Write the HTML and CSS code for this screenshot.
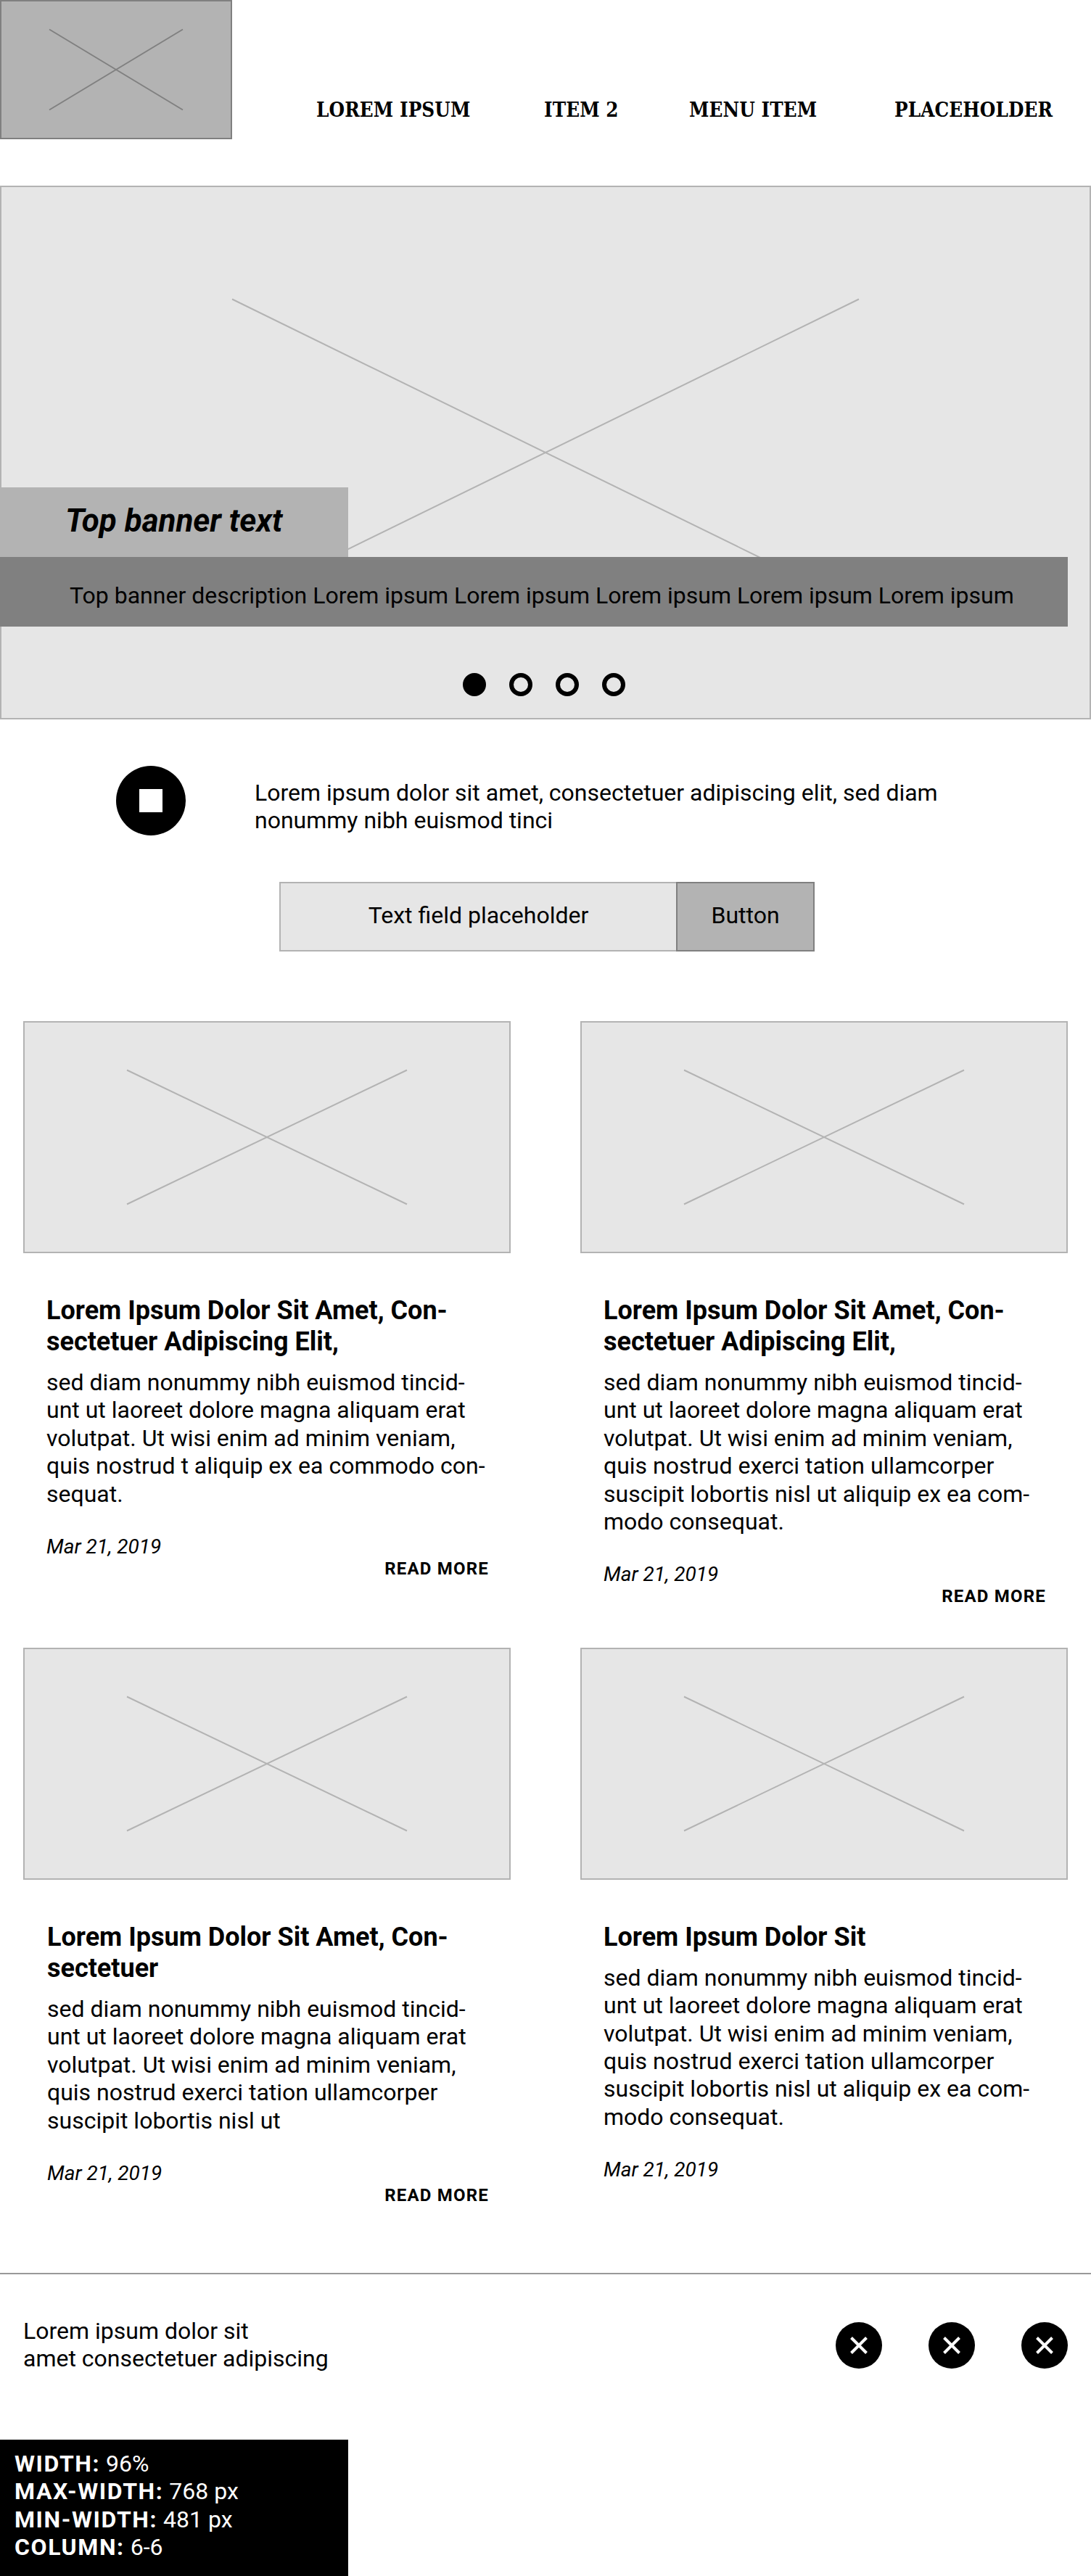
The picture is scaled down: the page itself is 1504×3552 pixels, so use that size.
FILE: index.html
```html
<!DOCTYPE html>
<html lang="en">
<head>
<meta charset="utf-8">
<title>Wireframe</title>
<link rel="stylesheet" href="styles.css">
</head>
<body>
<header class="header">
  <svg class="logo" viewBox="0 0 320 192"><path d="M68 40.5 252 151.5M252 40.5 68 151.5"/></svg>
  <nav class="nav">
    <a class="nav-item">LOREM IPSUM</a>
    <a class="nav-item">ITEM 2</a>
    <a class="nav-item">MENU ITEM</a>
    <a class="nav-item">PLACEHOLDER</a>
  </nav>
</header>

<section class="banner">
  <svg class="banner-cross" viewBox="0 0 1504 736"><path d="M320 156.500 1184 579.500M1184 156.500 320 579.500"/></svg>
  <h1 class="banner-title">Top banner text</h1>
  <p class="banner-text">Top banner description Lorem ipsum Lorem ipsum Lorem ipsum Lorem ipsum Lorem ipsum</p>
  <div class="dots"><i class="dot active"></i><i class="dot"></i><i class="dot"></i><i class="dot"></i></div>
</section>

<section class="intro">
  <div class="intro-icon"><i class="intro-square"></i></div>
  <p class="intro-text">Lorem ipsum dolor sit amet, consectetuer adipiscing elit, sed diam<br>nonummy nibh euismod tinci</p>
</section>

<form class="form">
  <div class="field">Text field placeholder</div>
  <div class="button">Button</div>
</form>

<main class="cards">
  <article class="card">
    <svg class="thumb" viewBox="0 0 672 320"><path d="M143 67.500 529 252.500M529 67.500 143 252.500"/></svg>
    <div class="card-body">
      <h2 class="card-title">Lorem Ipsum Dolor Sit Amet, Con-<br>sectetuer Adipiscing Elit,</h2>
      <p class="card-text">sed diam nonummy nibh euismod tincid-<br>unt ut laoreet dolore magna aliquam erat<br>volutpat. Ut wisi enim ad minim veniam,<br>quis nostrud t aliquip ex ea commodo con-<br>sequat.</p>
      <p class="date">Mar 21, 2019</p>
      <a class="more">READ MORE</a>
    </div>
  </article>
  <article class="card">
    <svg class="thumb" viewBox="0 0 672 320"><path d="M143 67.500 529 252.500M529 67.500 143 252.500"/></svg>
    <div class="card-body">
      <h2 class="card-title">Lorem Ipsum Dolor Sit Amet, Con-<br>sectetuer Adipiscing Elit,</h2>
      <p class="card-text">sed diam nonummy nibh euismod tincid-<br>unt ut laoreet dolore magna aliquam erat<br>volutpat. Ut wisi enim ad minim veniam,<br>quis nostrud exerci tation ullamcorper<br>suscipit lobortis nisl ut aliquip ex ea com-<br>modo consequat.</p>
      <p class="date">Mar 21, 2019</p>
      <a class="more">READ MORE</a>
    </div>
  </article>
  <article class="card">
    <svg class="thumb" viewBox="0 0 672 320"><path d="M143 67.500 529 252.500M529 67.500 143 252.500"/></svg>
    <div class="card-body inset">
      <h2 class="card-title">Lorem Ipsum Dolor Sit Amet, Con-<br>sectetuer</h2>
      <p class="card-text">sed diam nonummy nibh euismod tincid-<br>unt ut laoreet dolore magna aliquam erat<br>volutpat. Ut wisi enim ad minim veniam,<br>quis nostrud exerci tation ullamcorper<br>suscipit lobortis nisl ut</p>
      <p class="date">Mar 21, 2019</p>
      <a class="more">READ MORE</a>
    </div>
  </article>
  <article class="card">
    <svg class="thumb" viewBox="0 0 672 320"><path d="M143 67.500 529 252.500M529 67.500 143 252.500"/></svg>
    <div class="card-body">
      <h2 class="card-title">Lorem Ipsum Dolor Sit</h2>
      <p class="card-text">sed diam nonummy nibh euismod tincid-<br>unt ut laoreet dolore magna aliquam erat<br>volutpat. Ut wisi enim ad minim veniam,<br>quis nostrud exerci tation ullamcorper<br>suscipit lobortis nisl ut aliquip ex ea com-<br>modo consequat.</p>
      <p class="date">Mar 21, 2019</p>
    </div>
  </article>
</main>

<footer class="footer">
  <p class="footer-text">Lorem ipsum dolor sit<br>amet consectetuer adipiscing</p>
  <div class="social">
    <svg class="social-icon" viewBox="0 0 64 64"><circle cx="32" cy="32" r="32"/><path d="M21.500 21.500 42.500 42.500M42.500 21.500 21.500 42.500"/></svg>
    <svg class="social-icon" viewBox="0 0 64 64"><circle cx="32" cy="32" r="32"/><path d="M21.500 21.500 42.500 42.500M42.500 21.500 21.500 42.500"/></svg>
    <svg class="social-icon" viewBox="0 0 64 64"><circle cx="32" cy="32" r="32"/><path d="M21.500 21.500 42.500 42.500M42.500 21.500 21.500 42.500"/></svg>
  </div>
</footer>

<aside class="specs">
  <p><b>WIDTH:</b> 96%</p>
  <p><b>MAX-WIDTH:</b> 768 px</p>
  <p><b>MIN-WIDTH:</b> 481 px</p>
  <p><b>COLUMN:</b> 6-6</p>
</aside>
</body>
</html>
```
FILE: styles.css
```css
* { box-sizing: border-box; }
body { margin: 0; width: 1504px; background: #fff; color: #000; font: 32px/38.4px Roboto, sans-serif; }
h1, h2, p { margin: 0; }
svg { display: block; fill: none; }

.header { display: flex; height: 256px; }
.logo { width: 320px; height: 192px; background: #b3b3b3; box-shadow: inset 0 0 0 2px #808080; stroke: #808080; stroke-width: 2; }
.nav { display: grid; grid-template-columns: 314px 200px 283px auto; padding: 134px 0 0 116px; }
.nav-item { font: bold 27.5px/34px "Roboto Slab", "DejaVu Serif Condensed", "DejaVu Serif", serif; letter-spacing: 0.1px; white-space: nowrap; }

.banner { position: relative; height: 736px; padding-top: 416px; background: #e6e6e6; box-shadow: inset 0 0 0 2px #b3b3b3; }
.banner-cross { position: absolute; inset: 0; width: 1504px; height: 736px; stroke: #b3b3b3; stroke-width: 2; }
.banner-title { position: relative; width: 480px; height: 96px; padding: 20px 0 0 90px; background: #b3b3b3; font: italic bold 44px/52px Roboto, sans-serif; white-space: nowrap; }
.banner-text { position: relative; width: 1472px; height: 96px; padding: 34px 0 0 96px; background: #808080; white-space: nowrap; }
.dots { display: flex; gap: 32px; padding: 64px 0 0 638px; }
.dot { width: 32px; height: 32px; border: 6px solid #000; border-radius: 50%; }
.dot.active { background: #000; }

.intro { display: flex; gap: 95px; padding: 64px 0 0 160px; }
.intro-icon { display: flex; align-items: center; justify-content: center; width: 96px; height: 96px; border-radius: 50%; background: #000; }
.intro-square { width: 32px; height: 32px; background: #fff; }
.intro-text { padding-top: 18px; white-space: nowrap; }

.form { display: flex; margin: 64px 0 0 385px; }
.field, .button { height: 96px; padding-top: 25px; text-align: center; }
.field { width: 547px; background: #e6e6e6; border: 2px solid #b3b3b3; border-right: 0; }
.button { width: 191px; background: #b3b3b3; border: 2px solid #808080; }

.cards { display: grid; grid-template-columns: 672px 672px; grid-template-rows: 864px 862px; column-gap: 96px; padding: 96px 32px 0; }
.thumb { width: 672px; height: 320px; background: #e6e6e6; box-shadow: inset 0 0 0 2px #b3b3b3; stroke: #b3b3b3; stroke-width: 2; }
.card-body { padding: 58px 30px 0 32px; display: flex; flex-direction: column; white-space: nowrap; }
.card-body.inset { padding-left: 33px; }
.card-title { font: bold 36px/43.2px Roboto, sans-serif; }
.card-text { margin-top: 14.5px; }
.date { margin-top: 37px; font: italic 28px/33.6px Roboto, sans-serif; }
.more { align-self: flex-end; margin-top: -0.5px; font: bold 24px/28.8px Roboto, sans-serif; letter-spacing: 0.05em; }

.footer { display: flex; justify-content: space-between; height: 230px; padding: 59px 32px 0; border-top: 2px solid #999; }
.social { display: flex; gap: 64px; padding-top: 7px; }
.social-icon { width: 64px; height: 64px; }
.social-icon circle { fill: #000; }
.social-icon path { stroke: #fff; stroke-width: 4; }

.specs { width: 480px; height: 188px; padding: 14px 20px; background: #000; color: #fff; }
.specs b { letter-spacing: 0.05em; }
```
